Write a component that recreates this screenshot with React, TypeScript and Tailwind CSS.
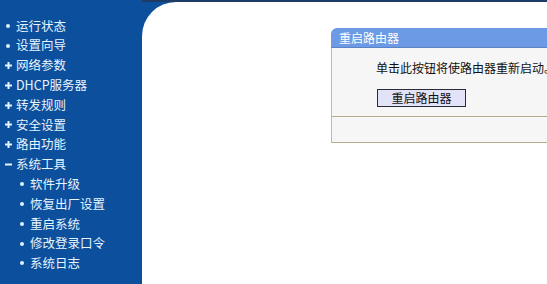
const MENU: { label: string; mark: "dot" | "plus" | "minus"; sub?: boolean }[] = [
  { label: "运行状态", mark: "dot" },
  { label: "设置向导", mark: "dot" },
  { label: "网络参数", mark: "plus" },
  { label: "DHCP服务器", mark: "plus" },
  { label: "转发规则", mark: "plus" },
  { label: "安全设置", mark: "plus" },
  { label: "路由功能", mark: "plus" },
  { label: "系统工具", mark: "minus" },
  { label: "软件升级", mark: "dot", sub: true },
  { label: "恢复出厂设置", mark: "dot", sub: true },
  { label: "重启系统", mark: "dot", sub: true },
  { label: "修改登录口令", mark: "dot", sub: true },
  { label: "系统日志", mark: "dot", sub: true },
];

function Mark({ mark }: { mark: "dot" | "plus" | "minus" }) {
  if (mark === "dot") return <span className="w-[4px] h-[4px] rounded-full bg-[#dff1ff]" />;
  if (mark === "plus")
    return (
      <svg width="7" height="7" viewBox="0 0 7 7">
        <path d="M0 3.5h7M3.5 0v7" stroke="#e6f4ff" strokeWidth="2" />
      </svg>
    );
  return (
    <svg width="7" height="7" viewBox="0 0 7 7">
      <path d="M0 3.5h7" stroke="#e6f4ff" strokeWidth="2" />
    </svg>
  );
}

export default function App() {
  return (
    <div
      className="w-[547px] h-[284px] flex overflow-hidden bg-[#0c4f9d] text-[12px]"
      style={{ fontFamily: '"Noto Sans CJK SC", "DejaVu Sans", sans-serif' }}
    >
      {/* left menu */}
      <div className="w-[142px] shrink-0 pt-[16px] flex flex-col">
        {MENU.map((m) => (
          <div
            key={m.label}
            className={`h-[19.8px] flex items-center text-[#e6f5ff] leading-none ${m.sub ? "pl-[16px]" : "pl-[2px]"}`}
          >
            <span className="w-[12px] flex justify-center items-center">
              <Mark mark={m.mark} />
            </span>
            <span className="ml-[2px] text-[12.5px]">{m.label}</span>
          </div>
        ))}
      </div>

      {/* content */}
      <div className="flex-1 border-t-2 border-[#1c3c66] flex flex-col">
        <div className="flex-1 bg-white rounded-tl-[34px] pl-[189px] pt-[26px]">
          <div className="w-[300px]">
            <div className="h-[20px] bg-[#6d9ae4] rounded-tl-[6px] border-b border-[#5b82c4] flex items-center pl-[8px] text-white">
              重启路由器
            </div>
            <div className="bg-[#f6f6f6] border-l border-[#c6b89a] border-b">
              <div className="h-[69px] pl-[44px] pt-[13px] border-b border-[#b8aa8c]">
                <div className="text-[#111] leading-[14px]">单击此按钮将使路由器重新启动。</div>
                <div className="mt-[14px] w-[89px] h-[18px] ml-[1px] border border-[#2a2a3a] bg-[#e2e2f8] flex items-center justify-center text-[#111] leading-none">
                  重启路由器
                </div>
              </div>
              <div className="h-[26px] border-b border-[#b8aa8c] -mb-px" />
            </div>
          </div>
        </div>
      </div>
    </div>
  );
}
